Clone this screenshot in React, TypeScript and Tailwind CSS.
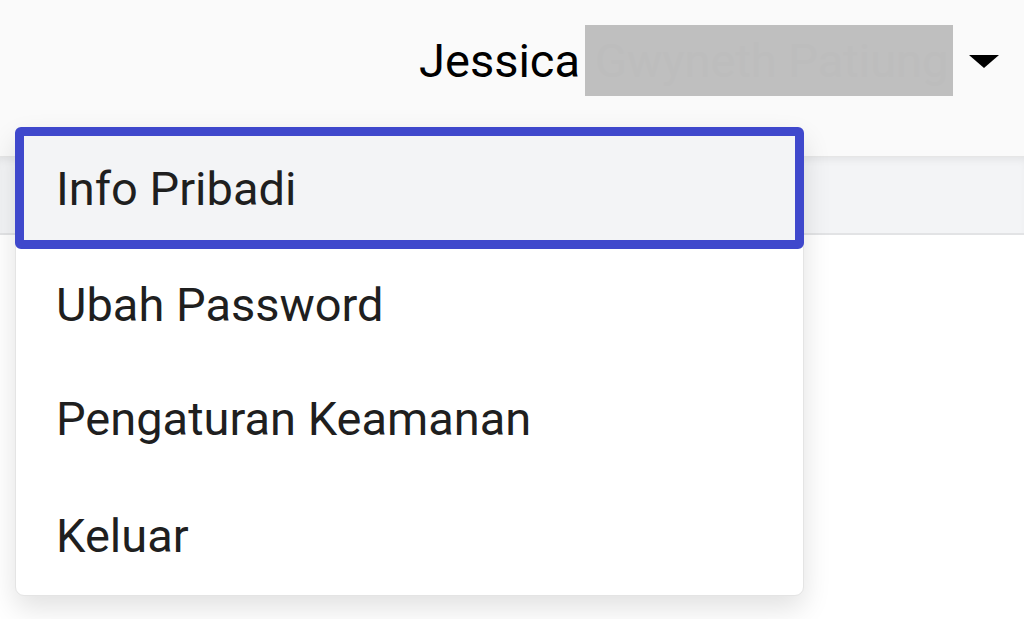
import React from "react";

const items = ["Info Pribadi", "Ubah Password", "Pengaturan Keamanan", "Keluar"];

const Caret = () => (
  <svg width="30" height="13" viewBox="0 0 30 13" className="block">
    <path d="M0 0 H30 L15 13 Z" fill="#000" />
  </svg>
);

export default function App() {
  return (
    <div
      className="relative w-[1024px] h-[619px] overflow-hidden bg-white"
      style={{ fontFamily: "Roboto, 'Noto Sans', sans-serif" }}
    >
      <header className="h-[157px] bg-[#fafafa] border-b border-[#e6e6e6] flex items-start justify-end pt-[25px] pr-[25px]">
        <div className="flex items-center">
          <span className="text-[47px] leading-[71px] text-black mr-[5px]">Jessica</span>
          <span className="w-[368px] h-[71px] bg-[#bfbfbf] text-[47px] leading-[71px] text-[#bdbdbd] pl-[10px] whitespace-nowrap overflow-hidden">
            Gwyneth Patiung
          </span>
          <span className="ml-[16px] mt-[2px]">
            <Caret />
          </span>
        </div>
      </header>
      <div className="h-[78px] bg-[#f3f4f6] border-b-2 border-[#e2e3e5] shadow-[inset_0_6px_8px_-4px_rgba(0,0,0,0.08)]" />

      {/* dropdown menu */}
      <div className="absolute left-[15px] top-[127px] w-[789px] h-[469px] bg-white rounded-[9px] border border-[#e4e4e4] shadow-[0_12px_28px_rgba(0,0,0,0.12)] flex flex-col">
        {items.map((label, i) => (
          <div
            key={label}
            className={
              i === 0
                ? "h-[122px] -mt-px -mx-px flex items-center pl-[32px] bg-[#f3f4f6] border-[9px] border-[#3f48cc] rounded-[6px]"
                : i === 1
                ? "h-[111px] flex items-center pl-[40px]"
                : "h-[117px] flex items-center pl-[40px]"
            }
          >
            <span className="text-[47px] leading-none text-[#1f1f1f] whitespace-nowrap">{label}</span>
          </div>
        ))}
      </div>
    </div>
  );
}
